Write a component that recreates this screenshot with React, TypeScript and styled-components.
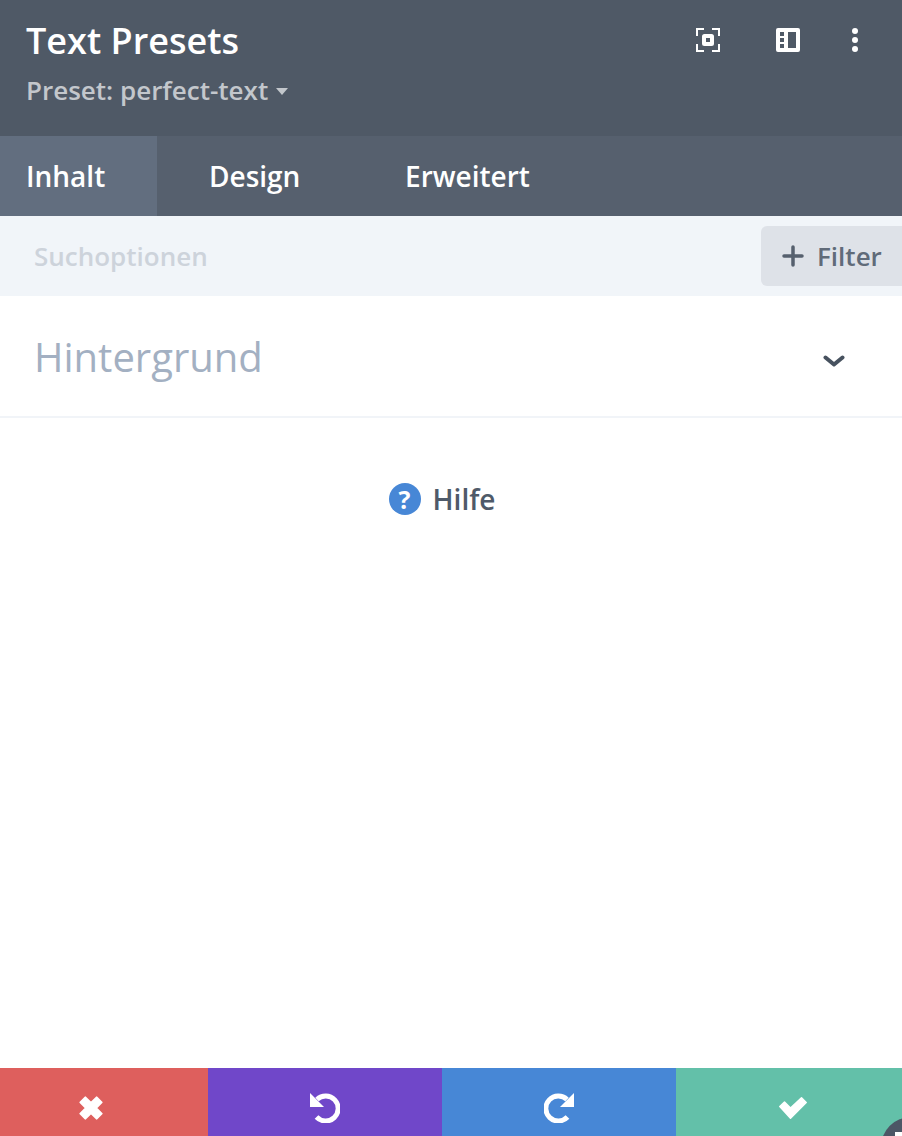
import React from "react";
import styled, { createGlobalStyle } from "styled-components";

const GlobalStyle = createGlobalStyle`
  html, body {
    margin: 0;
    padding: 0;
    background: #fff;
    font-family: "Open Sans", "Liberation Sans", sans-serif;
    -webkit-font-smoothing: antialiased;
  }
`;

const Modal = styled.div`
  position: relative;
  width: 902px;
  height: 1136px;
  display: flex;
  flex-direction: column;
  overflow: hidden;
  background: #fff;
`;

const Header = styled.header`
  height: 136px;
  box-sizing: border-box;
  flex: none;
  display: flex;
  justify-content: space-between;
  padding: 18px 43px 0 26px;
  background: #4f5966;
`;

const TitleBlock = styled.div`
  display: flex;
  flex-direction: column;
`;

const Title = styled.h1`
  margin: 0;
  font-size: 36px;
  line-height: 46px;
  font-weight: 600;
  color: #fff;
`;

const PresetRow = styled.div`
  display: flex;
  align-items: center;
  gap: 8px;
  margin-top: 8px;
  font-size: 26px;
  line-height: 36px;
  font-weight: 600;
  color: #c3c7cc;
`;

const Caret = styled.span`
  width: 0;
  height: 0;
  margin-top: 2px;
  border-left: 6px solid transparent;
  border-right: 6px solid transparent;
  border-top: 7px solid #c3c7cc;
`;

const HeaderIcons = styled.div`
  display: flex;
  align-items: center;
  height: 44px;
`;

const HeaderIcon = styled.svg<{ $gap?: number }>`
  display: block;
  margin-left: ${(p) => p.$gap ?? 0}px;
  fill: #fff;
`;

const Tabs = styled.nav`
  height: 80px;
  flex: none;
  display: flex;
  background: #56606e;
`;

const Tab = styled.div<{ $active?: boolean; $width: number; $inset: number }>`
  width: ${(p) => p.$width}px;
  padding-left: ${(p) => p.$inset}px;
  box-sizing: border-box;
  display: flex;
  align-items: center;
  font-size: 28px;
  font-weight: 600;
  color: #fff;
  background: ${(p) => (p.$active ? "#626e7f" : "transparent")};
`;

const SearchBar = styled.div`
  height: 80px;
  flex: none;
  box-sizing: border-box;
  display: flex;
  align-items: center;
  justify-content: space-between;
  padding: 0 0 0 34px;
  background: #f1f5f9;
`;

const SearchHint = styled.span`
  font-size: 26px;
  font-weight: 600;
  color: #cdd3db;
`;

const FilterButton = styled.button`
  width: 141px;
  height: 60px;
  border: 0;
  padding: 0 0 0 21px;
  display: flex;
  align-items: center;
  gap: 13px;
  border-radius: 6px 0 0 6px;
  background: #dee2e8;
  font-family: inherit;
  font-size: 26px;
  font-weight: 600;
  color: #606b79;
`;

const Section = styled.div`
  height: 122px;
  flex: none;
  box-sizing: border-box;
  display: flex;
  align-items: center;
  justify-content: space-between;
  padding: 0 57px 0 34px;
  border-bottom: 2px solid #f1f4f8;
`;

const SectionTitle = styled.h2`
  margin: 0;
  font-size: 40px;
  font-weight: 400;
  color: #a3b0c2;
`;

const Chevron = styled.svg`
  margin-top: 10px;
`;

const Help = styled.div`
  display: flex;
  align-items: center;
  justify-content: center;
  gap: 12px;
  margin-top: 63px;
  padding-right: 18px;
  font-size: 28px;
  line-height: 36px;
  font-weight: 600;
  color: #4f5a69;
`;

const HelpBadge = styled.span`
  width: 32px;
  height: 32px;
  border-radius: 50%;
  display: flex;
  align-items: center;
  justify-content: center;
  background: #4787d6;
  color: #fff;
  font-size: 25px;
  font-weight: 700;
`;

const Footer = styled.footer`
  margin-top: auto;
  height: 68px;
  flex: none;
  display: flex;
`;

const FooterButton = styled.button<{ $bg: string; $width: number; $shift?: number }>`
  width: ${(p) => p.$width}px;
  border: 0;
  padding: 12px 0 0;
  display: flex;
  align-items: center;
  justify-content: center;
  background: ${(p) => p.$bg};

  svg {
    transform: translateX(${(p) => p.$shift ?? 0}px);
  }
`;

const CornerBadge = styled.div`
  position: absolute;
  left: 881px;
  top: 1117px;
  width: 60px;
  height: 60px;
  border-radius: 50%;
  background: #4c5766;
`;

const CornerMark = styled.span`
  position: absolute;
  left: 14px;
  top: 15px;
  width: 10px;
  height: 10px;
  background: #fff;
`;

export default function App() {
  return (
    <Modal>
      <GlobalStyle />
      <Header>
        <TitleBlock>
          <Title>Text Presets</Title>
          <PresetRow>
            Preset: perfect-text
            <Caret />
          </PresetRow>
        </TitleBlock>
        <HeaderIcons>
          <HeaderIcon width="24" height="24" viewBox="0 0 24 24">
            <path d="M0 0h8v2H2v6H0zM16 0h8v8h-2V2h-6zM0 16h2v6h6v2H0zM22 16h2v8h-8v-2h6z" />
            <path fillRule="evenodd" d="M8.500 6h7A2.500 2.500 0 0 1 18 8.500v7a2.500 2.500 0 0 1-2.500 2.500h-7A2.500 2.500 0 0 1 6 15.500v-7A2.500 2.500 0 0 1 8.500 6zM10 10v4h4v-4z" />
          </HeaderIcon>
          <HeaderIcon $gap={56} width="24" height="24" viewBox="0 0 24 24">
            <path fillRule="evenodd" d="M2 0h20a2 2 0 0 1 2 2v20a2 2 0 0 1-2 2H2a2 2 0 0 1-2-2V2a2 2 0 0 1 2-2zM4 4v4h4V4zM4 10v4h4v-4zM4 16v4h4v-4zM12 4v16h8V4z" />
          </HeaderIcon>
          <HeaderIcon $gap={51} width="8" height="26" viewBox="0 0 8 26">
            <circle cx="4" cy="4" r="3" />
            <circle cx="4" cy="13" r="3" />
            <circle cx="4" cy="22" r="3" />
          </HeaderIcon>
        </HeaderIcons>
      </Header>
      <Tabs>
        <Tab $active $width={157} $inset={26}>Inhalt</Tab>
        <Tab $width={194} $inset={52}>Design</Tab>
        <Tab $width={300} $inset={54}>Erweitert</Tab>
      </Tabs>
      <SearchBar>
        <SearchHint>Suchoptionen</SearchHint>
        <FilterButton>
          <svg width="22" height="22" viewBox="0 0 22 22">
            <path d="M11 2v18M2 11h18" stroke="#56606e" strokeWidth="3.500" strokeLinecap="round" />
          </svg>
          Filter
        </FilterButton>
      </SearchBar>
      <Section>
        <SectionTitle>Hintergrund</SectionTitle>
        <Chevron width="22" height="12" viewBox="0 0 22 12">
          <path d="M2.500 2.500L11 9.500l8.500-7" fill="none" stroke="#47525f" strokeWidth="4" strokeLinecap="round" strokeLinejoin="round" />
        </Chevron>
      </Section>
      <Help>
        <HelpBadge>?</HelpBadge>
        Hilfe
      </Help>
      <Footer>
        <FooterButton $bg="#de5f5d" $width={208} $shift={-13}>
          <svg width="24" height="24" viewBox="0 0 24 24">
            <path
              transform="rotate(45 12 12)"
              d="M8.500.5h7v8h8v7h-8v8h-7v-8h-8v-7h8z"
              fill="#fff"
              stroke="#fff"
              strokeWidth="2"
              strokeLinejoin="round"
            />
          </svg>
        </FooterButton>
        <FooterButton $bg="#7047c9" $width={234}>
          <svg width="30" height="30" viewBox="0 0 30 30">
            <path d="M7 6.500A12.500 12.500 0 1 1 6.500 24" fill="none" stroke="#fff" strokeWidth="5" />
            <path d="M0 0v14h14z" fill="#fff" />
          </svg>
        </FooterButton>
        <FooterButton $bg="#4787d6" $width={234}>
          <svg width="30" height="30" viewBox="0 0 30 30">
            <path d="M23 6.500A12.500 12.500 0 1 0 23.500 24" fill="none" stroke="#fff" strokeWidth="5" />
            <path d="M30 0v14H16z" fill="#fff" />
          </svg>
        </FooterButton>
        <FooterButton $bg="#63c0a9" $width={226} $shift={4}>
          <svg width="28" height="22" viewBox="0 0 28 22">
            <path
              d="M5.500 5l6 6L22.500.8l4.700 4.700-15.700 15.700L.8 9.500z"
              fill="#fff"
              stroke="#fff"
              strokeWidth="1.500"
              strokeLinejoin="round"
            />
          </svg>
        </FooterButton>
      </Footer>
      <CornerBadge>
        <CornerMark />
      </CornerBadge>
    </Modal>
  );
}
